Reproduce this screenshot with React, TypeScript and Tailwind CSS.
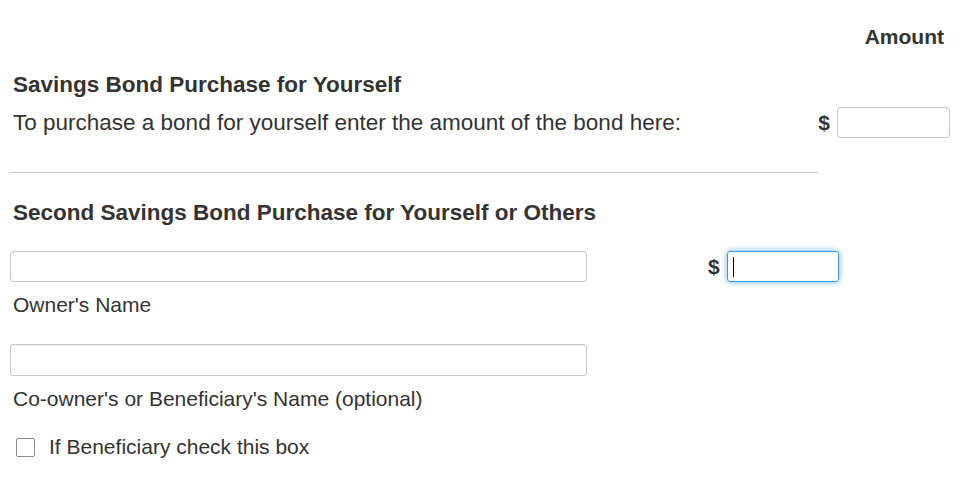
export default function App() {
  return (
    <div className="w-[966px] h-[484px] bg-white text-[#333] font-['Liberation_Sans',Arial,sans-serif] pt-[26px]">
      <div className="flex justify-end pr-[22px] text-[21px] leading-[22px] font-bold">Amount</div>

      <h2 className="mt-[22px] pl-[13px] text-[22.5px] leading-[30px] font-bold">Savings Bond Purchase for Yourself</h2>

      <div className="mt-[7px] flex items-center h-[31px]">
        <p className="flex-1 pl-[13px] text-[22.5px] leading-[31px]">
          To purchase a bond for yourself enter the amount of the bond here:
        </p>
        <span className="text-[21px] font-bold leading-[31px]">$</span>
        <input
          type="text"
          className="ml-[7px] mr-[16px] w-[113px] h-[31px] border border-[#c6c6c6] rounded-[3px] shadow-[inset_0_1px_1px_rgba(0,0,0,0.06)] outline-none px-[5px]"
        />
      </div>

      <div className="mt-[34px] ml-[9px] w-[810px] h-px bg-[#cfcfcf]" />

      <h2 className="mt-[25px] pl-[13px] text-[22.5px] leading-[30px] font-bold">
        Second Savings Bond Purchase for Yourself or Others
      </h2>

      <div className="mt-[23px] flex items-center h-[31px]">
        <input
          type="text"
          className="ml-[10px] w-[577px] h-[31px] border border-[#c6c6c6] rounded-[3px] shadow-[inset_0_1px_1px_rgba(0,0,0,0.06)] outline-none px-[5px]"
        />
        <span className="ml-[121px] text-[21px] font-bold leading-[31px]">$</span>
        <div className="ml-[7px] w-[112px] h-[31px] border border-[#3c9de2] rounded-[3px] shadow-[0_0_6px_rgba(60,157,226,0.8)] flex items-center pl-[5px]">
          <span className="w-px h-[20px] bg-black" />
        </div>
      </div>

      <div className="mt-[10px] pl-[13px] text-[21px] leading-[26px]">Owner's Name</div>

      <input
        type="text"
        className="block mt-[26px] ml-[10px] w-[577px] h-[32px] border border-[#c6c6c6] rounded-[3px] shadow-[inset_0_1px_1px_rgba(0,0,0,0.06)] outline-none px-[5px]"
      />

      <div className="mt-[10px] pl-[13px] text-[21px] leading-[26px]">Co-owner's or Beneficiary's Name (optional)</div>

      <label className="mt-[22px] flex items-center h-[26px] pl-[16px] gap-[14px] text-[21px] leading-[26px]">
        <input
          type="checkbox"
          className="appearance-none w-[19px] h-[19px] border border-[#8c8c8c] rounded-[2px] bg-white m-0"
        />
        <span>If Beneficiary check this box</span>
      </label>
    </div>
  );
}
